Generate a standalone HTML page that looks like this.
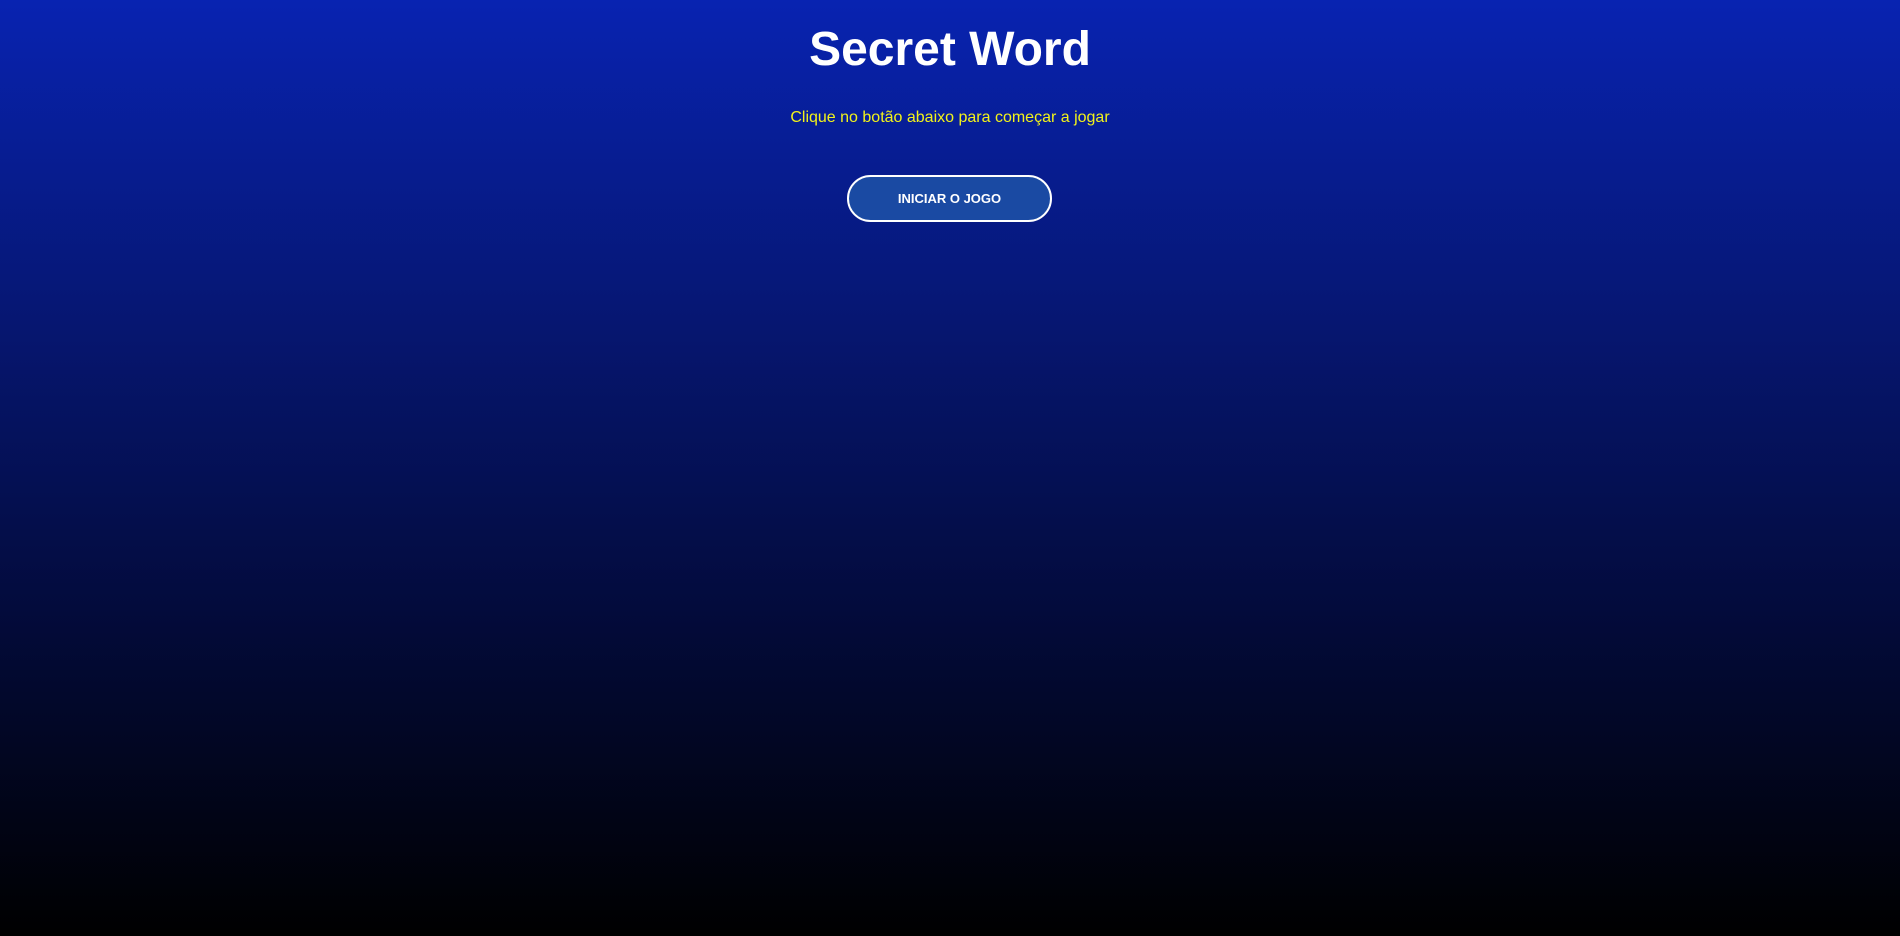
<!DOCTYPE html>
<html><head><meta charset="utf-8"><style>
html,body{margin:0;padding:0;width:1900px;height:936px;overflow:hidden}
body{background:linear-gradient(to bottom,#0823b1 0%,#061670 35%,#030b3c 65%,#000000 100%);font-family:"Liberation Sans",Arial,sans-serif;text-align:center;position:relative}
h1{position:absolute;left:0;right:0;top:20px;margin:0;font-size:48px;font-weight:bold;color:#fff;line-height:60px}
p{position:absolute;left:0;right:0;top:108px;margin:0;font-size:16px;color:#f2f21a;line-height:20px}
button{position:absolute;left:847px;top:175px;width:205px;height:47px;border:2px solid #fff;border-radius:24px;background:#1a4aa3;color:#fff;font-family:"Liberation Sans",Arial,sans-serif;font-weight:bold;font-size:13px;padding:0}
</style></head><body>
<h1>Secret Word</h1>
<p>Clique no botão abaixo para começar a jogar</p>
<button>INICIAR O JOGO</button>
</body></html>
